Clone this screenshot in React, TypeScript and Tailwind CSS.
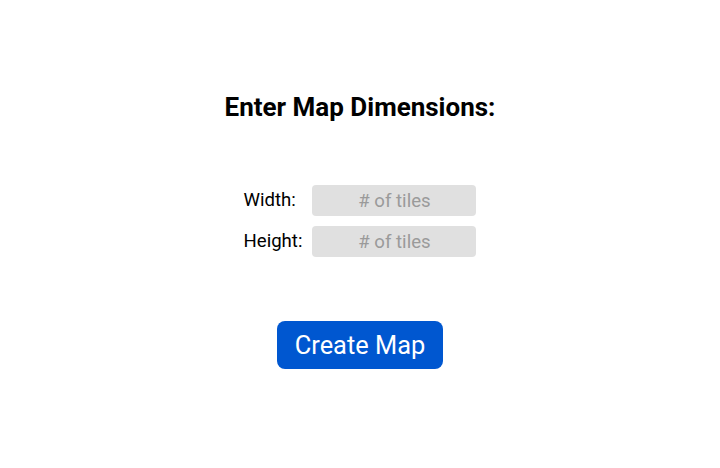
export default function App() {
  return (
    <div className="w-[720px] h-[468px] bg-white flex flex-col items-center" style={{ fontFamily: "Roboto, sans-serif" }}>
      <h1 className="mt-[89px] text-[26px] leading-[36px] font-bold text-black">Enter Map Dimensions:</h1>
      <div className="mt-[60px] grid grid-cols-[auto_164px] gap-x-[10px] gap-y-[10px] items-center">
        <label className="text-[18.6px] text-black">Width:</label>
        <input placeholder="# of tiles" className="h-[31px] rounded-[4px] bg-[#e0e0e0] text-center text-[18.6px] placeholder:text-[#9a9a9a] outline-none" />
        <label className="text-[18.6px] text-black">Height:</label>
        <input placeholder="# of tiles" className="h-[31px] rounded-[4px] bg-[#e0e0e0] text-center text-[18.6px] placeholder:text-[#9a9a9a] outline-none" />
      </div>
      <button className="mt-[64px] w-[166px] h-[48px] rounded-[8px] bg-[#0057d0] text-white text-[25.4px]">Create Map</button>
    </div>
  );
}
